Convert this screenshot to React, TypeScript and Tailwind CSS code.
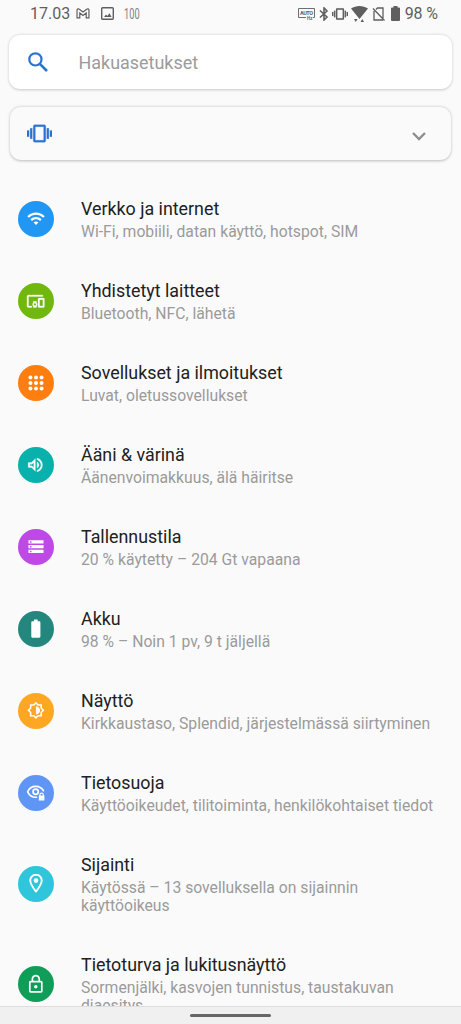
import type { ReactNode } from 'react';

type Setting = {
    title: string;
    summary: string;
    color: string;
    icon: ReactNode;
};

const settings: Setting[] = [
    {
        title: 'Verkko ja internet',
        summary: 'Wi-Fi, mobiili, datan käyttö, hotspot, SIM',
        color: 'bg-[#2296f3]',
        icon: (
            <path d="M1 9l2 2c4.970-4.970 13.030-4.970 18 0l2-2C16.930 2.930 7.080 2.930 1 9zm8 8l3 3 3-3c-1.650-1.660-4.340-1.660-6 0zm-4-4l2 2c2.760-2.760 7.240-2.760 10 0l2-2C15.140 9.140 8.870 9.140 5 13z" transform="translate(0 -.5)" />
        ),
    },
    {
        title: 'Yhdistetyt laitteet',
        summary: 'Bluetooth, NFC, lähetä',
        color: 'bg-[#70b80e]',
        icon: (
            <path
                d="M3 6h18V4H3c-1.100 0-2 .9-2 2v12c0 1.100.9 2 2 2h4v-2H3V6zm10 6H9v1.780c-.61.55-1 1.330-1 2.220s.39 1.670 1 2.220V20h4v-1.780c.61-.55 1-1.340 1-2.220s-.39-1.670-1-2.220V12zm-2 5.500c-.83 0-1.500-.67-1.500-1.500s.67-1.500 1.500-1.500 1.500.67 1.500 1.500-.67 1.500-1.500 1.500zM22 8h-6c-.5 0-1 .5-1 1v10c0 .5.5 1 1 1h6c.5 0 1-.5 1-1V9c0-.5-.5-1-1-1zm-1 10h-4v-8h4v8z"
                transform="translate(-.4 .3)"
                stroke="currentColor"
                strokeWidth=".3"
            />
        ),
    },
    {
        title: 'Sovellukset ja ilmoitukset',
        summary: 'Luvat, oletussovellukset',
        color: 'bg-[#ff7e0f]',
        icon: (
            <>
                {[5, 12, 19].map((y) =>
                    [5, 12, 19].map((x) => <circle key={`${x}-${y}`} cx={x} cy={y} r="2.500" />)
                )}
            </>
        ),
    },
    {
        title: 'Ääni & värinä',
        summary: 'Äänenvoimakkuus, älä häiritse',
        color: 'bg-[#08b1ab]',
        icon: (
            <path
                d="M3 9v6h4l5 5V4L7 9H3zm7-.17v6.340L7.830 13H5v-2h2.830L10 8.830zM16.500 12c0-1.770-1.020-3.290-2.500-4.030v8.050c1.480-.73 2.500-2.250 2.500-4.020zM14 3.230v2.060c2.890.86 5 3.540 5 6.710s-2.110 5.850-5 6.710v2.060c4.010-.91 7-4.490 7-8.770s-2.990-7.860-7-8.770z"
                transform="translate(-.8 0)"
                stroke="currentColor"
                strokeWidth=".3"
            />
        ),
    },
    {
        title: 'Tallennustila',
        summary: '20 % käytetty – 204 Gt vapaana',
        color: 'bg-[#bf49e6]',
        icon: (
            <path d="M2 20h20v-4H2v4zm2-3h2v2H4v-2zM2 4v4h20V4H2zm4 3H4V5h2v2zm-4 7h20v-4H2v4zm2-3h2v2H4v-2z" transform="translate(.6 -.4) scale(.95 1)" />
        ),
    },
    {
        title: 'Akku',
        summary: '98 % – Noin 1 pv, 9 t jäljellä',
        color: 'bg-[#24877e]',
        icon: (
            <path d="M15.670 4H14V2h-4v2H8.330C7.600 4 7 4.600 7 5.330v15.330C7 21.400 7.600 22 8.330 22h7.330c.74 0 1.340-.6 1.340-1.330V5.330C17 4.600 16.400 4 15.670 4z" transform="translate(-2 -2.400) scale(1.150)" />
        ),
    },
    {
        title: 'Näyttö',
        summary: 'Kirkkaustaso, Splendid, järjestelmässä siirtyminen',
        color: 'bg-[#ffa722]',
        icon: (
            <path d="M20 15.310L23.310 12 20 8.690V4h-4.690L12 .69 8.690 4H4v4.690L.69 12 4 15.310V20h4.690L12 23.310 15.310 20H20v-4.690zm-2-.83V18h-3.520L12 20.480 9.520 18H6v-3.520L3.520 12 6 9.520V6h3.520L12 3.520 14.480 6H18v3.520L20.480 12 18 14.480zM12 6.500v11c3.040 0 5.500-2.460 5.500-5.500S15.040 6.500 12 6.500z" transform="translate(.5 -.2) scale(.95)" />
        ),
    },
    {
        title: 'Tietosuoja',
        summary: 'Käyttöoikeudet, tilitoiminta, henkilökohtaiset tiedot',
        color: 'bg-[#5f96f5]',
        icon: (
            <>
                <path
                    d="M13.500 17.300c-5.400.6-9.900-2.300-12-6.800C3.300 6.300 7.300 3.600 11.600 3.600c4.600 0 8.400 2.500 10.200 6.400"
                    fill="none"
                    stroke="currentColor"
                    strokeWidth="2"
                />
                <circle cx="11.600" cy="10.500" r="3.300" fill="none" stroke="currentColor" strokeWidth="2.200" />
                <path d="M16.300 15.200v-1a2.800 2.800 0 0 1 5.600 0v1h.7v6.300h-7v-6.300zm1.400 0h2.800v-.9a1.400 1.400 0 0 0-2.800 0z" />
            </>
        ),
    },
    {
        title: 'Sijainti',
        summary: 'Käytössä – 13 sovelluksella on sijainnin käyttöoikeus',
        color: 'bg-[#2fc5da]',
        icon: (
            <path d="M12 2C8.130 2 5 5.130 5 9c0 5.250 7 13 7 13s7-7.750 7-13c0-3.870-3.130-7-7-7zM7 9c0-2.760 2.240-5 5-5s5 2.240 5 5c0 2.880-2.880 7.190-5 9.880C9.920 16.210 7 11.850 7 9zm5-2.500a2.500 2.500 0 1 0 0 5 2.500 2.500 0 0 0 0-5z" transform="translate(-2.400 -3.200) scale(1.200)" />
        ),
    },
    {
        title: 'Tietoturva ja lukitusnäyttö',
        summary: 'Sormenjälki, kasvojen tunnistus, taustakuvan diaesitys',
        color: 'bg-[#109d58]',
        icon: (
            <path d="M18 8h-1V6c0-2.760-2.240-5-5-5S7 3.240 7 6v2H6c-1.100 0-2 .9-2 2v10c0 1.100.9 2 2 2h12c1.100 0 2-.9 2-2V10c0-1.100-.9-2-2-2zM9 6c0-1.660 1.340-3 3-3s3 1.340 3 3v2H9V6zm9 14H6V10h12v10zm-6-3c1.100 0 2-.9 2-2s-.9-2-2-2-2 .9-2 2 .9 2 2 2z" transform="translate(-1.200 -.8) scale(1.080)" />
        ),
    },
];

function VibrationIcon({ className }: { className: string }) {
    return (
        <svg viewBox="0 0 24 24" fill="currentColor" stroke="currentColor" strokeWidth=".2" className={className}>
            <path d="M0 15h2V9H0v6zm3 2h2V7H3v10zm19-8v6h2V9h-2zm-3 8h2V7h-2v10zM16.500 3.500h-9C6.670 3.500 6 4.170 6 5v14c0 .83.67 1.500 1.500 1.500h9c.83 0 1.500-.67 1.500-1.500V5c0-.83-.67-1.500-1.500-1.500zM16 18.500H8v-13h8v13z" />
        </svg>
    );
}

function StatusBar() {
    return (
        <div className="flex h-[35px] items-start justify-between pt-[3px] pr-[23px] pl-[30px] text-[#5f5f5f]">
            <div className="flex h-[21px] items-center">
                <span className="w-[46px] text-[16px]">17.03</span>
                <svg viewBox="0 0 15 12" className="mb-px h-[11px] w-[14px]" fill="none" stroke="currentColor" strokeWidth="1.300">
                    <path d="M1 2.200v8.600h3V5.500l3.500 2.700L11 5.500v5.300h3V2.200C14 1 12.500.5 11.500 1.300l-4 3-4-3C2.500.5 1 1 1 2.200z" />
                </svg>
                <svg viewBox="0 0 13 13" className="ml-[11px] size-[13px]" fill="none" stroke="currentColor" strokeWidth="1.400">
                    <rect x=".7" y=".7" width="11.600" height="11.600" rx="1" />
                    <path d="M3 10l2-2.600 1.400 1.500 2-2.700L10.600 10z" fill="currentColor" stroke="none" />
                </svg>
                <span className="mt-px ml-[10px] origin-left scale-x-[.66] text-[14px] text-[#808080]">100</span>
            </div>
            <div className="flex h-[21px] items-center">
                <svg viewBox="0 0 17 13" className="h-[13px] w-[17px]" fill="none" stroke="currentColor">
                    <path d="M8 10.500H.5v-9h16v9H15" strokeWidth=".9" />
                    <text x="2" y="8" fontSize="5.500" fontWeight="700" fill="currentColor" stroke="none" textLength="13">
                        AUTO
                    </text>
                    <text x="9" y="12.500" fontSize="4.500" fontWeight="700" fill="currentColor" stroke="none">
                        Hz
                    </text>
                </svg>
                <svg viewBox="0 0 10 14" className="ml-[4px] h-[14px] w-[10px]" fill="none" stroke="currentColor" strokeWidth="1.600">
                    <path d="M1 3.500l7 6.500-3 3V1l3 3-7 6.500" />
                </svg>
                <VibrationIcon className="ml-[3px] size-[16px]" />
                <svg viewBox="0 0 17 18" className="ml-[3px] h-[18px] w-[17px]" fill="currentColor">
                    <path d="M0 3.500C5 0 12 0 17 3.500L8.500 14zM3 14h3.500l-1.700 3zM9.500 17H13l-1.700-3z" />
                </svg>
                <svg viewBox="0 0 13 14" className="ml-[4px] h-[14px] w-[13px]" fill="none" stroke="currentColor" strokeWidth="1.300">
                    <path d="M4 2.500L5.500 1H11v10M2 4v9h9M1 1.500l11.500 12" />
                </svg>
                <svg viewBox="0 0 9 15" className="ml-[6px] h-[15px] w-[9px]" fill="currentColor">
                    <path d="M2.500 0h4v1.500H8q1 0 1 1V14q0 1-1 1H1q-1 0-1-1V2.500q0-1 1-1h1.500z" />
                </svg>
                <span className="ml-[5px] text-[16px] tracking-[-0.1px] whitespace-nowrap">98 %</span>
            </div>
        </div>
    );
}

function SettingRow({ title, summary, color, icon }: Setting) {
    return (
        <li className="flex items-center pr-5 pl-[18px]">
            <div className={`flex size-9 shrink-0 items-center justify-center rounded-full text-white ${color}`}>
                <svg viewBox="-.6 -.6 25.200 25.200" className="size-5" fill="currentColor">
                    {icon}
                </svg>
            </div>
            <div className="ml-[27px] pt-5 pb-[19px]">
                <h2 className="text-[17.850px] leading-[22px] text-[#212121]">{title}</h2>
                <p className="mt-[3px] text-[15.720px] leading-[18px] text-[#9b9b9b]">{summary}</p>
            </div>
        </li>
    );
}

export default function App() {
    return (
        <div className="flex h-[1024px] w-[461px] flex-col overflow-hidden bg-[#fafafa] font-[Roboto,sans-serif]">
            <StatusBar />
            <div className="mr-[9px] ml-[9px] flex h-[54px] shrink-0 items-center rounded-[11px] bg-white pl-[19px] shadow-[0_0.5px_3px_rgba(0,0,0,0.2)]">
                <svg viewBox="0 0 20 20" className="size-5" fill="none" stroke="#2b73d2" strokeWidth="2.200">
                    <circle cx="7.400" cy="7.400" r="6.100" />
                    <path d="M11.800 11.800l7.200 7.200" strokeWidth="2.600" />
                </svg>
                <span className="mt-0.5 ml-[30.500px] text-[17.950px] text-[#9b9b9b]">Hakuasetukset</span>
            </div>
            <div className="mx-[10px] mt-[18px] flex h-[53px] shrink-0 items-center justify-between rounded-[11px] bg-[#fafafa] pr-[25px] pl-[17px] shadow-[0_0.5px_3px_rgba(0,0,0,0.25)]">
                <VibrationIcon className="size-[25px] text-[#2b73d2]" />
                <svg viewBox="0 0 14 9" className="mt-1.5 h-[9px] w-[14px]" fill="none" stroke="#8e8e8e" strokeWidth="2.400">
                    <path d="M1 1l6 6 6-6" />
                </svg>
            </div>
            <ul className="mt-[18px] min-h-0 flex-1 overflow-hidden">
                {settings.map((setting) => (
                    <SettingRow key={setting.title} {...setting} />
                ))}
            </ul>
            <div className="flex h-[18px] shrink-0 justify-center border-t border-[#dedede] bg-[#f0f0f0] pt-[7px]">
                <div className="h-[3px] w-[81px] rounded-full bg-[#666666]" />
            </div>
        </div>
    );
}
